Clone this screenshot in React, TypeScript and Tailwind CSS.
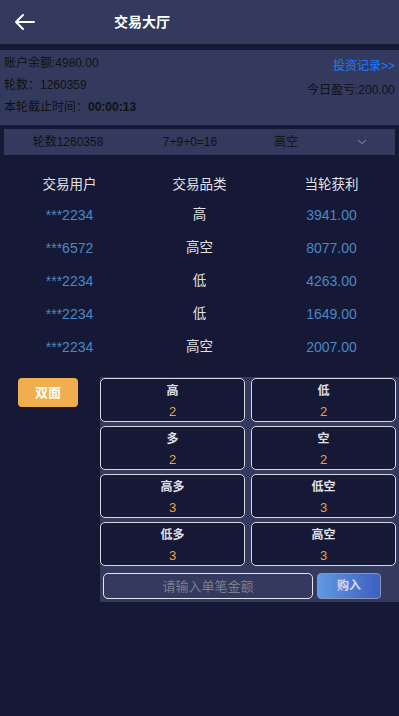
import { ChevronDown } from 'lucide-react';

const rows = [
  { user: '***2234', kind: '高', win: '3941.00' },
  { user: '***6572', kind: '高空', win: '8077.00' },
  { user: '***2234', kind: '低', win: '4263.00' },
  { user: '***2234', kind: '低', win: '1649.00' },
  { user: '***2234', kind: '高空', win: '2007.00' },
];

const options = [
  { name: '高', odds: 2 },
  { name: '低', odds: 2 },
  { name: '多', odds: 2 },
  { name: '空', odds: 2 },
  { name: '高多', odds: 3 },
  { name: '低空', odds: 3 },
  { name: '低多', odds: 3 },
  { name: '高空', odds: 3 },
];

export default function App() {
  return (
    <div
      className="min-h-[716px] bg-[#161936] text-[12px]"
      style={{ fontFamily: '"Liberation Sans", "Noto Sans CJK SC", sans-serif' }}
    >
      {/* Header */}
      <div className="h-[44px] bg-[#333a5e] flex items-center">
        <button className="w-[50px] h-full flex items-center justify-center text-white">
          <svg width="22" height="18" viewBox="0 0 22 18" fill="none" stroke="white" strokeWidth="2" strokeLinecap="round" strokeLinejoin="round">
            <path d="M20 9H2M9 2L2 9l7 7" />
          </svg>
        </button>
        <h1 className="ml-[64px] text-white text-[14px] font-bold">交易大厅</h1>
      </div>

      {/* Account info */}
      <div className="mt-[6px] h-[75px] bg-[#333a5e] px-[4px] flex justify-between text-[#111]">
        <div className="flex flex-col pt-[5px] gap-[5px] leading-[17px]">
          <span>账户余额:4980.00</span>
          <span>轮数：1260359</span>
          <span>
            本轮截止时间：<b>00:00:13</b>
          </span>
        </div>
        <div className="flex flex-col items-end pt-[7px]">
          <span className="text-[#1d7bff]">投资记录&gt;&gt;</span>
          <span className="mt-[6px]">今日盈亏:200.00</span>
        </div>
      </div>

      {/* Last round */}
      <div className="mt-[4px] mx-[4px] h-[26px] bg-[#333a5e] flex items-center text-[#111]">
        <span className="w-[128px] text-center">轮数1260358</span>
        <span className="w-[116px] text-center">7+9+0=16</span>
        <span className="w-[76px] text-center">高空</span>
        <span className="flex-1 flex justify-center pl-[4px]">
          <ChevronDown size={14} className="text-[#6b7190]" />
        </span>
      </div>

      {/* Recent table */}
      <div className="mt-[17px] text-[14px]">
        <div className="grid grid-cols-3 h-[27px] items-center text-[13.5px] text-[#e0e0e6]">
          <span className="text-center pl-[6px]">交易用户</span>
          <span className="text-center">交易品类</span>
          <span className="text-center pr-[2px]">当轮获利</span>
        </div>
        {rows.map((r, i) => (
          <div key={i} className="grid grid-cols-3 h-[33px] items-center">
            <span className="text-center text-[#4a88c2] pl-[6px]">{r.user}</span>
            <span className="text-center text-[#e0e0e6] text-[13.5px]">{r.kind}</span>
            <span className="text-center text-[#4a88c2] pr-[2px]">{r.win}</span>
          </div>
        ))}
      </div>

      {/* Bet area */}
      <div className="mt-[13px] flex">
        <div className="w-[100px] pl-[18px] pt-[1px]">
          <button className="w-[60px] h-[29px] rounded-[4px] bg-[#f0ae4e] text-white text-[13px] font-bold">
            双面
          </button>
        </div>
        <div className="flex-1 bg-[#333a5e] pt-[1px] pb-[3px]">
          <div className="grid grid-cols-2 gap-x-[6px] gap-y-[4px] pr-[3px]">
            {options.map((o) => (
              <div
                key={o.name}
                className="h-[44px] rounded-[5px] border border-[#d8d8e0] bg-[#161936] flex flex-col items-center pt-[4px]"
              >
                <span className="text-[#e0e0e6] font-bold leading-[16px]">{o.name}</span>
                <span className="text-[#f0a33a] text-[13px] mt-[5px] leading-[16px]">{o.odds}</span>
              </div>
            ))}
          </div>
          <div className="flex items-center mt-[7px] pl-[3px] gap-[4px]">
            <input
              placeholder="请输入单笔金额"
              className="w-[210px] h-[26px] rounded-[5px] border border-[#e6e6ee] bg-[#333a5e] text-center text-[13px] text-white placeholder:text-[#7c7f8e] outline-none"
            />
            <button className="w-[64px] h-[26px] rounded-[4px] border border-[#8d93b5] bg-gradient-to-r from-[#5f9ae0] to-[#3f5ec2] text-[#d8dbe8] font-bold">
              购入
            </button>
          </div>
        </div>
      </div>
    </div>
  );
}
